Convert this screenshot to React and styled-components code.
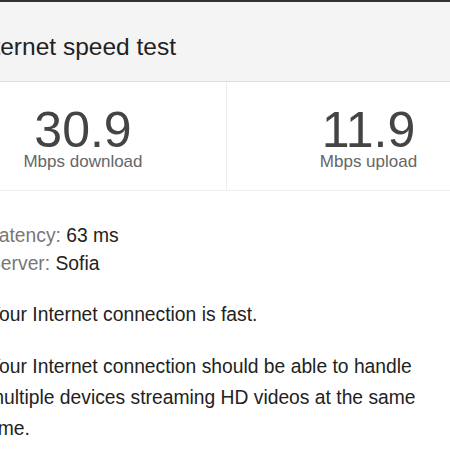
import React from 'react'
import styled, { createGlobalStyle } from 'styled-components'

const Global = createGlobalStyle`
  html, body {
    margin: 0;
    padding: 0;
    background: #fff;
    overflow: hidden;
    font-family: "Liberation Sans", Arial, sans-serif;
  }
`

const stats = [
  { value: '30.9', label: 'Mbps download' },
  { value: '11.9', label: 'Mbps upload' },
]

export default function App() {
  return (
    <>
      <Global />
      <Card>
        <Header>
          <Title>Internet speed test</Title>
        </Header>
        <Stats>
          {stats.map((s) => (
            <Stat key={s.label}>
              <Value>{s.value}</Value>
              <Label>{s.label}</Label>
            </Stat>
          ))}
        </Stats>
        <Body>
          <Meta>
            <Row>
              <Key>Latency:</Key> 63 ms
            </Row>
            <Row>
              <Key>Server:</Key> Sofia
            </Row>
          </Meta>
          <Para>Your Internet connection is fast.</Para>
          <Para>
            Your Internet connection should be able to handle multiple devices
            streaming HD videos at the same time.
          </Para>
        </Body>
      </Card>
    </>
  )
}

const Card = styled.div`
  margin-left: -60px;
  width: 570px;
  border-top: 2px solid #333;
`

const Header = styled.div`
  background: #f4f4f4;
  border-bottom: 1px solid #dcdcdc;
  padding: 31px 0 20px 33px;
`

const Title = styled.div`
  font-size: 24.5px;
  line-height: 28px;
  color: #222;
`

const Stats = styled.div`
  display: grid;
  grid-template-columns: 287px 1fr;
  border-bottom: 1px solid #f0f0f0;
`

const Stat = styled.div`
  display: flex;
  flex-direction: column;
  align-items: center;
  padding: 23px 0 21px;
  &:first-child {
    border-right: 1px solid #ececec;
  }
`

const Value = styled.div`
  font-size: 50px;
  line-height: 50px;
  color: #444;
`

const Label = styled.div`
  font-size: 17px;
  line-height: 14px;
  color: #666;
`

const Body = styled.div`
  padding: 31px 0 0 48px;
  color: #222;
  font-size: 19.3px;
`

const Meta = styled.div`
  line-height: 28px;
`

const Row = styled.div``

const Key = styled.span`
  color: #777;
`

const Para = styled.p`
  margin: 21px 0 0;
  line-height: 31px;
  max-width: 460px;
`
